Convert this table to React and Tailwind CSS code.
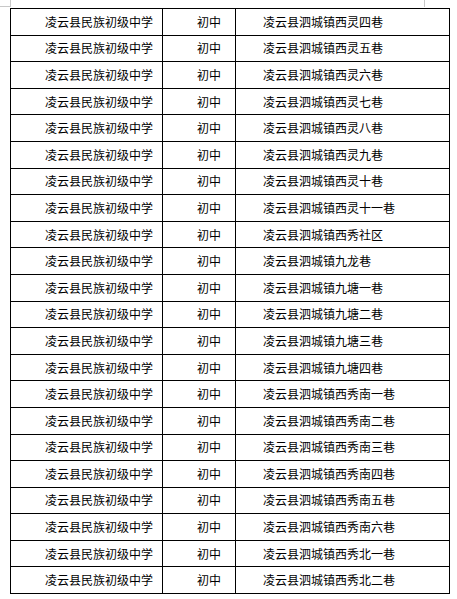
const streets = [
  "凌云县泗城镇西灵四巷",
  "凌云县泗城镇西灵五巷",
  "凌云县泗城镇西灵六巷",
  "凌云县泗城镇西灵七巷",
  "凌云县泗城镇西灵八巷",
  "凌云县泗城镇西灵九巷",
  "凌云县泗城镇西灵十巷",
  "凌云县泗城镇西灵十一巷",
  "凌云县泗城镇西秀社区",
  "凌云县泗城镇九龙巷",
  "凌云县泗城镇九塘一巷",
  "凌云县泗城镇九塘二巷",
  "凌云县泗城镇九塘三巷",
  "凌云县泗城镇九塘四巷",
  "凌云县泗城镇西秀南一巷",
  "凌云县泗城镇西秀南二巷",
  "凌云县泗城镇西秀南三巷",
  "凌云县泗城镇西秀南四巷",
  "凌云县泗城镇西秀南五巷",
  "凌云县泗城镇西秀南六巷",
  "凌云县泗城镇西秀北一巷",
  "凌云县泗城镇西秀北二巷",
];

export default function App() {
  return (
    <div
      className="relative w-[457px] h-[599px] bg-white text-black text-[12px] leading-none"
      style={{ fontFamily: '"Noto Sans CJK SC", "Noto Sans", sans-serif' }}
    >
      {/* page corner marks */}
      <div className="absolute left-[10px] top-0 w-px h-[7px] bg-[#c8c8c8]" />
      <div className="absolute left-0 top-[6px] w-[10px] h-px bg-[#c8c8c8]" />
      <div className="absolute left-[424px] top-0 w-px h-[7px] bg-[#c8c8c8]" />

      <div className="pt-[8px] pl-[10px]">
        <table className="border-collapse table-fixed w-[439px]">
          <colgroup>
            <col className="w-[152px]" />
            <col className="w-[73px]" />
            <col className="w-[214px]" />
          </colgroup>
          <tbody>
            {streets.map((s, i) => (
              <tr key={i} className="h-[26.6px]">
                <td className="border border-black pl-[34px] p-0 align-middle whitespace-nowrap">
                  凌云县民族初级中学
                </td>
                <td className="border border-black pl-[34px] p-0 align-middle whitespace-nowrap">
                  初中
                </td>
                <td className="border border-black pl-[27px] p-0 align-middle whitespace-nowrap">
                  {s}
                </td>
              </tr>
            ))}
          </tbody>
        </table>
      </div>
    </div>
  );
}
